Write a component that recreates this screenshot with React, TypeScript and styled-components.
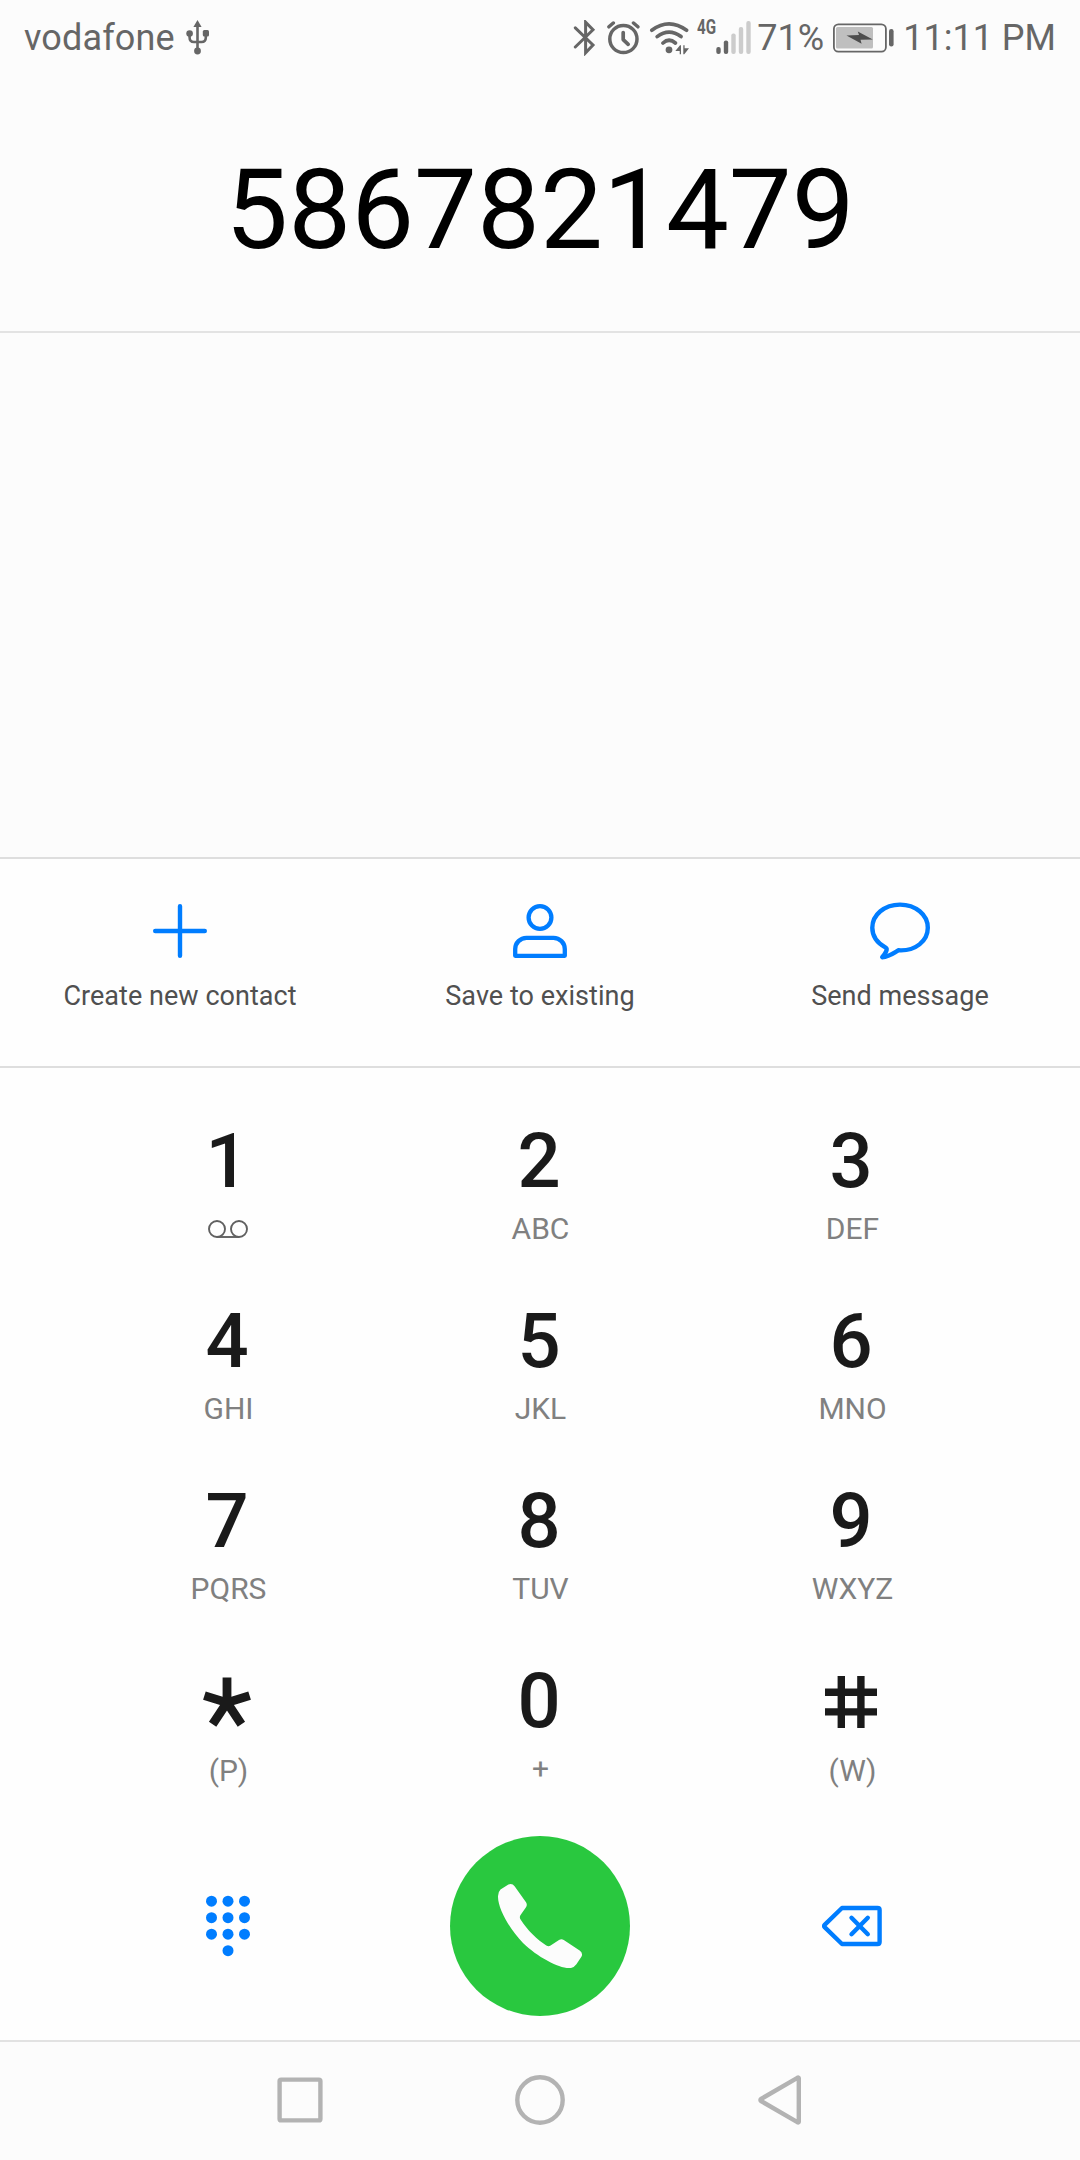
import React from 'react';
import styled, { createGlobalStyle } from 'styled-components';

const BLUE = '#007dff';
const STATUS = '#666666';

const GlobalStyle = createGlobalStyle`
  * { box-sizing: border-box; }
  html, body { margin: 0; padding: 0; background: #fcfcfc; }
  body { font-family: Roboto, "Noto Sans", sans-serif; }
  svg { display: block; flex: none; }
`;

const Screen = styled.main`
  width: 1080px;
  height: 2160px;
  display: flex;
  flex-direction: column;
  background: #fcfcfc;
  overflow: hidden;
`;

const StatusBar = styled.header`
  height: 75px;
  display: flex;
  align-items: center;
  justify-content: space-between;
  padding: 0 24px;
  color: ${STATUS};
  font-size: 36px;
  line-height: 42px;
  white-space: nowrap;
`;

const StatusGroup = styled.div`
  display: flex;
  align-items: center;
  height: 75px;
`;

const StatusItem = styled.span<{ $before?: number; $width?: number }>`
  flex: none;
  margin-left: ${p => p.$before ?? 0}px;
  width: ${p => (p.$width ? `${p.$width}px` : 'auto')};
`;

const Carrier = styled.span`
  letter-spacing: 0.15px;
`;

const NetworkType = styled.span`
  width: 19px;
  height: 35px;
  margin-left: 6.5px;
  font-size: 20.5px;
  font-weight: 700;
  line-height: 15px;
  transform: scaleX(0.74);
  transform-origin: 0 0;
`;

const NumberDisplay = styled.section`
  height: 258px;
  display: flex;
  justify-content: center;
  padding-top: 69px;
  border-bottom: 2px solid #e3e3e3;
  color: #000;
  font-size: 112px;
  line-height: 132px;
`;

const Suggestions = styled.section`
  flex: 1;
`;

const Actions = styled.section`
  height: 211px;
  display: grid;
  grid-template-columns: repeat(3, 360px);
  background: #fefefe;
  border-top: 2px solid #dedede;
  border-bottom: 2px solid #dedede;
`;

const Action = styled.button`
  border: 0;
  background: none;
  padding: 40px 0 0;
  display: flex;
  flex-direction: column;
  align-items: center;
  gap: 17px;
  font: 400 27px/32px Roboto, "Noto Sans", sans-serif;
  letter-spacing: 0.04px;
  color: #505050;
`;

const Dialer = styled.section`
  height: 972px;
  display: flex;
  flex-direction: column;
  justify-content: space-between;
  padding: 55px 72px 24px;
  background: #fefefe;
`;

const Keypad = styled.div`
  display: grid;
  grid-template-columns: repeat(3, 312px);
  grid-template-rows: repeat(3, 180px) 130px;
`;

const Key = styled.button`
  border: 0;
  background: none;
  padding: 0;
  display: flex;
  flex-direction: column;
  align-items: center;
  font-family: Roboto, "Noto Sans", sans-serif;
`;

const KeyMain = styled.span`
  height: 76px;
  padding-right: 2px;
  display: flex;
  align-items: center;
  font-size: 76px;
  font-weight: 500;
  line-height: 76px;
  color: #1a1a1a;
`;

const KeySub = styled.span<{ $drop: number; $nudge: number }>`
  height: 36px;
  margin-top: ${p => 12 + p.$drop}px;
  padding-left: ${p => p.$nudge}px;
  display: flex;
  align-items: center;
  font-size: 30px;
  line-height: 36px;
  color: #808080;
`;

const CallRow = styled.div`
  height: 180px;
  display: grid;
  grid-template-columns: repeat(3, 312px);
  place-items: center;
`;

const IconButton = styled.button`
  border: 0;
  background: none;
  padding: 0;
`;

const CallButton = styled.button`
  width: 180px;
  height: 180px;
  border: 0;
  border-radius: 50%;
  padding: 0;
  background: #29c83f;
`;

const NavBar = styled.nav`
  height: 120px;
  display: grid;
  grid-template-columns: repeat(3, 240px);
  justify-content: center;
  place-items: center;
  padding-bottom: 2px;
  border-top: 2px solid #e2e2e2;
  background: #fcfcfc;
`;

const UsbIcon = () => (
  <svg width="23" height="35" viewBox="0 0 23 35" fill={STATUS}>
    <path d="M11.5 0L15.6 7H7.4Z" />
    <path d="M11.5 5V31M3.6 14V17.5Q3.6 22 8 22H15.5Q19.8 22 19.8 17.5V14" fill="none" stroke={STATUS} strokeWidth="2.6" />
    <circle cx="3.6" cy="13.6" r="3.3" />
    <rect x="16.8" y="10" width="6.2" height="6.6" rx="1.5" />
    <circle cx="11.5" cy="31" r="3.4" />
  </svg>
);

const BluetoothIcon = () => (
  <svg width="24" height="36" viewBox="0 0 24 36" fill="none" stroke={STATUS} strokeWidth="3" strokeLinecap="round">
    <path d="M2.3 7.8L20 25L12.6 32.8V2.2L20 9.8L2.3 27" />
  </svg>
);

const AlarmIcon = () => (
  <svg width="33" height="36" viewBox="0 0 33 36" fill="none" stroke={STATUS} strokeWidth="3.5" strokeLinecap="round">
    <circle cx="16.4" cy="19" r="13.6" />
    <path d="M16.2 12.5V19.6L21.2 24.3" strokeWidth="3.7" strokeLinejoin="round" />
    <path d="M1.9 6.8L6.3 3M26.5 3L30.9 6.8" />
  </svg>
);

const WifiIcon = () => (
  <svg width="42" height="36" viewBox="0 0 42 36" fill="none" stroke={STATUS} strokeWidth="3.7" strokeLinecap="round">
    <path d="M2.8 10.2Q20 -2.6 37.6 10.2M8.2 16.6Q20 7.6 32 16.6M14 23Q20 17.4 26.4 23" />
    <circle cx="20" cy="29.8" r="3.4" fill={STATUS} stroke="none" />
    <path d="M32 34.3H30.7V31H26.3L31 25.3H32ZM34.3 25.3H35.6V28.2H40L35.3 34.3H34.3Z" fill={STATUS} stroke="none" />
  </svg>
);

const bars = [
  { height: 7, on: true },
  { height: 13.5, on: true },
  { height: 20.5, on: false },
  { height: 27, on: false },
  { height: 33, on: false },
];

const SignalIcon = () => (
  <svg width="35" height="35" viewBox="0 0 35 35">
    {bars.map((bar, i) => (
      <rect key={i} x={0.3 + i * 7.5} y={34 - bar.height} width="4.4" height={bar.height} rx="2" fill={bar.on ? STATUS : '#cccccc'} />
    ))}
  </svg>
);

const BatteryIcon = () => (
  <svg width="62" height="30" viewBox="0 0 62 30">
    <rect x="1.9" y="1.3" width="52" height="27.4" rx="4.5" fill="none" stroke={STATUS} strokeWidth="1.8" />
    <rect x="4" y="4" width="37" height="21.4" rx="1.5" fill="#bfbfbf" />
    <path d="M14.5 12.6L27 12L25.8 8.4L40.8 16.4L28.5 16.8L29.6 20.8Z" fill="#4d4d4d" />
    <rect x="57" y="6" width="4.6" height="17.4" rx="2.2" fill={STATUS} />
  </svg>
);

const AddIcon = () => (
  <svg width="64" height="64" viewBox="0 0 64 64" fill="none" stroke={BLUE} strokeWidth="4.4" strokeLinecap="round">
    <path d="M32 7.2V56.8M7.2 32H56.8" />
  </svg>
);

const PersonIcon = () => (
  <svg width="64" height="64" viewBox="0 0 64 64" fill="none" stroke={BLUE} strokeWidth="4.3" strokeLinejoin="round">
    <circle cx="32" cy="18.5" r="11.4" />
    <path d="M18.5 38.8H45.5A11.3 11.3 0 0 1 56.8 50.1V56.8H7.2V50.1A11.3 11.3 0 0 1 18.5 38.8Z" />
  </svg>
);

const MessageIcon = () => (
  <svg width="64" height="64" viewBox="0 0 64 64" fill="none" stroke={BLUE} strokeWidth="4.4" strokeLinejoin="round">
    <path d="M32 5.6C16.5 5.6 4.3 15.7 4.3 28.8C4.3 37.3 9.6 44.3 17.7 48.6C20 50 17.8 54 14.2 58.2C22 57.6 25.5 54 30.5 51.3C47.5 52.3 59.8 42 59.8 28.8C59.8 15.7 47.5 5.6 32 5.6Z" />
  </svg>
);

const VoicemailIcon = () => (
  <svg width="40" height="20" viewBox="0 0 40 20" fill="none" stroke="#606060" strokeWidth="1.9">
    <circle cx="9" cy="10" r="8" />
    <circle cx="31" cy="10" r="8" />
    <path d="M9 18H31" />
  </svg>
);

const StarIcon = () => (
  <svg width="54" height="54" viewBox="0 0 54 54" fill="none" stroke="#1a1a1a" strokeWidth="8.8">
    <path d="M27 29V3.4M27 28.6L49.6 21.6M27 28.6L4.4 21.6M26 27L41.4 50.2M28 27L12.6 50.2" />
  </svg>
);

const HashIcon = () => (
  <svg width="54" height="54" viewBox="0 0 54 54" fill="none" stroke="#1a1a1a" strokeWidth="7.4">
    <path d="M17.3 2V54M36.9 2V54M1 18.2H53M1 37.9H53" />
  </svg>
);

const DialpadIcon = () => (
  <svg width="60" height="62" viewBox="0 0 60 62" fill={BLUE}>
    {[0, 1, 2].map(row =>
      [0, 1, 2].map(col => <circle key={`${row}${col}`} cx={13.5 + col * 16.5} cy={6.2 + row * 16.5} r="5.5" />),
    )}
    <circle cx="30" cy="55.7" r="5.5" />
  </svg>
);

const PhoneIcon = () => (
  <svg width="180" height="180" viewBox="0 0 180 180" fill="#fcfcfc">
    <path d="M50.5 53.5L58 48.7Q62 46.8 64.6 50.2L76 66.3Q77.6 68.8 76 71.2L70.4 79.2Q69.2 81.2 70.6 83.6C77.5 94.5 87 103.5 96.3 109.6Q98.6 111 100.6 109.6L109 104Q111.4 102.5 113.8 104L130 114.8Q133.2 117.3 131.4 120.8L126.4 128.3Q124.4 131.2 121 131.9C111 133.6 88 121.5 73 107C60.5 94.5 48.2 73.5 48 61Q47.8 56 50.5 53.5Z" />
  </svg>
);

const BackspaceIcon = () => (
  <svg width="60" height="42" viewBox="0 0 60 42" fill="none" stroke={BLUE} strokeWidth="4.4" strokeLinejoin="round" strokeLinecap="round">
    <path d="M20 3H55.5Q57.6 3 57.6 5V37Q57.6 39 55.5 39H20L2.6 22.2Q1.6 21 2.6 19.8Z" />
    <path d="M29.5 12.8L45.8 29.2M45.8 12.8L29.5 29.2" />
  </svg>
);

const NavIcon = ({ children }: { children: React.ReactNode }) => (
  <svg width="60" height="60" viewBox="0 0 60 60" fill="none" stroke="#b3b3b3" strokeWidth="4.4" strokeLinejoin="round">
    {children}
  </svg>
);

const actions = [
  { label: 'Create new contact', icon: <AddIcon /> },
  { label: 'Save to existing', icon: <PersonIcon /> },
  { label: 'Send message', icon: <MessageIcon /> },
];

type KeyDef = { name: string; main: React.ReactNode; sub: React.ReactNode; drop?: number };

const keys: KeyDef[] = [
  { name: '1', main: '1', sub: <VoicemailIcon /> },
  { name: '2', main: '2', sub: 'ABC' },
  { name: '3', main: '3', sub: 'DEF' },
  { name: '4', main: '4', sub: 'GHI' },
  { name: '5', main: '5', sub: 'JKL' },
  { name: '6', main: '6', sub: 'MNO' },
  { name: '7', main: '7', sub: 'PQRS' },
  { name: '8', main: '8', sub: 'TUV' },
  { name: '9', main: '9', sub: 'WXYZ' },
  { name: 'star', main: <StarIcon />, sub: '(P)', drop: 2 },
  { name: '0', main: '0', sub: '+' },
  { name: 'hash', main: <HashIcon />, sub: '(W)', drop: 2 },
];

export default function App() {
  return (
    <>
      <GlobalStyle />
      <Screen>
        <StatusBar>
          <StatusGroup>
            <Carrier>vodafone</Carrier>
            <StatusItem $before={11}><UsbIcon /></StatusItem>
          </StatusGroup>
          <StatusGroup>
            <StatusItem><BluetoothIcon /></StatusItem>
            <StatusItem $before={10}><AlarmIcon /></StatusItem>
            <StatusItem $before={9}><WifiIcon /></StatusItem>
            <NetworkType>4G</NetworkType>
            <StatusItem><SignalIcon /></StatusItem>
            <StatusItem $before={6} $width={67}>71%</StatusItem>
            <StatusItem $before={8}><BatteryIcon /></StatusItem>
            <StatusItem $before={9}>11:11 PM</StatusItem>
          </StatusGroup>
        </StatusBar>
        <NumberDisplay>5867821479</NumberDisplay>
        <Suggestions />
        <Actions>
          {actions.map(a => (
            <Action key={a.label}>
              {a.icon}
              {a.label}
            </Action>
          ))}
        </Actions>
        <Dialer>
          <Keypad>
            {keys.map(k => (
              <Key key={k.name}>
                <KeyMain>{k.main}</KeyMain>
                <KeySub $drop={k.drop ?? 0} $nudge={typeof k.sub === 'string' ? 1 : 0}>{k.sub}</KeySub>
              </Key>
            ))}
          </Keypad>
          <CallRow>
            <IconButton><DialpadIcon /></IconButton>
            <CallButton><PhoneIcon /></CallButton>
            <IconButton><BackspaceIcon /></IconButton>
          </CallRow>
        </Dialer>
        <NavBar>
          <NavIcon><rect x="9.6" y="9.6" width="40.8" height="40.8" rx="1.5" /></NavIcon>
          <NavIcon><circle cx="30" cy="30" r="22.7" /></NavIcon>
          <NavIcon><path d="M48.8 8.2V51.8Q48.6 52.8 47.4 52.2L11 31Q9.8 30 11 29L47.4 7.8Q48.6 7.2 48.8 8.2Z" /></NavIcon>
        </NavBar>
      </Screen>
    </>
  );
}
